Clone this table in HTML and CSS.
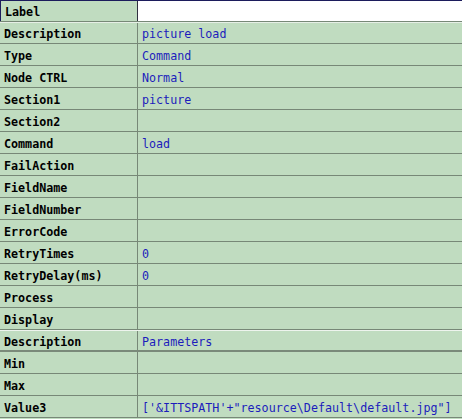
FILE: index.html
```html
<!DOCTYPE html>
<html>
<head>
<meta charset="utf-8">
<link rel="stylesheet" href="styles.css">
</head>
<body>
<div class="grid">
  <div class="row first"><div class="name focus">Label</div><div class="val white"></div></div>
  <div class="row head"><div class="name">Description</div><div class="val">picture load</div></div>
  <div class="row"><div class="name">Type</div><div class="val">Command</div></div>
  <div class="row"><div class="name">Node CTRL</div><div class="val">Normal</div></div>
  <div class="row"><div class="name">Section1</div><div class="val">picture</div></div>
  <div class="row"><div class="name">Section2</div><div class="val"></div></div>
  <div class="row"><div class="name">Command</div><div class="val">load</div></div>
  <div class="row"><div class="name">FailAction</div><div class="val"></div></div>
  <div class="row"><div class="name">FieldName</div><div class="val"></div></div>
  <div class="row"><div class="name">FieldNumber</div><div class="val"></div></div>
  <div class="row"><div class="name">ErrorCode</div><div class="val"></div></div>
  <div class="row"><div class="name">RetryTimes</div><div class="val">0</div></div>
  <div class="row"><div class="name">RetryDelay(ms)</div><div class="val">0</div></div>
  <div class="row"><div class="name">Process</div><div class="val"></div></div>
  <div class="row"><div class="name">Display</div><div class="val"></div></div>
  <div class="row section"><div class="name">Description</div><div class="val">Parameters</div></div>
  <div class="row"><div class="name">Min</div><div class="val"></div></div>
  <div class="row"><div class="name">Max</div><div class="val"></div></div>
  <div class="row"><div class="name">Value3</div><div class="val">['&amp;ITTSPATH'+"resource\Default\default.jpg"]</div></div>
</div>
</body>
</html>
```
FILE: styles.css
```css
html, body {
  margin: 0;
  padding: 0;
  background: #c0dcc0;
}
.grid {
  width: 462px;
  height: 419px;
  overflow: hidden;
  border-top: 1px solid #1c1c5c;
  box-sizing: border-box;
  font-family: "DejaVu Sans Mono", "Liberation Mono", monospace;
  font-size: 11.7px;
}
.row {
  display: flex;
  height: 22px;
  box-sizing: border-box;
  border-bottom: 1px solid #778877;
}
.row.first {
  height: 21px;
  border-bottom: 1px solid #778877;
}
.row.head {
  border-top: 1px solid #e6efe6;
  height: 22px;
}
.row.section {
  border-top: 1px solid #eef4ee;
  border-bottom: 2px solid #7a8a7a;
  height: 22px;
}
.name {
  width: 138px;
  flex: none;
  box-sizing: border-box;
  border-right: 1px solid #778877;
  padding-left: 4px;
  padding-top: 2px;
  font-weight: bold;
  color: #000;
  display: flex;
  align-items: center;
}
.name.focus {
  border-left: 1px solid #1c1c5c;
}
.val {
  flex: 1;
  padding-left: 4px;
  padding-top: 2px;
  color: #1c1cbc;
  display: flex;
  align-items: center;
  white-space: nowrap;
}
.val.white {
  background: #fff;
  border-left: 1px solid #303040;
  margin-left: -1px;
}
```
